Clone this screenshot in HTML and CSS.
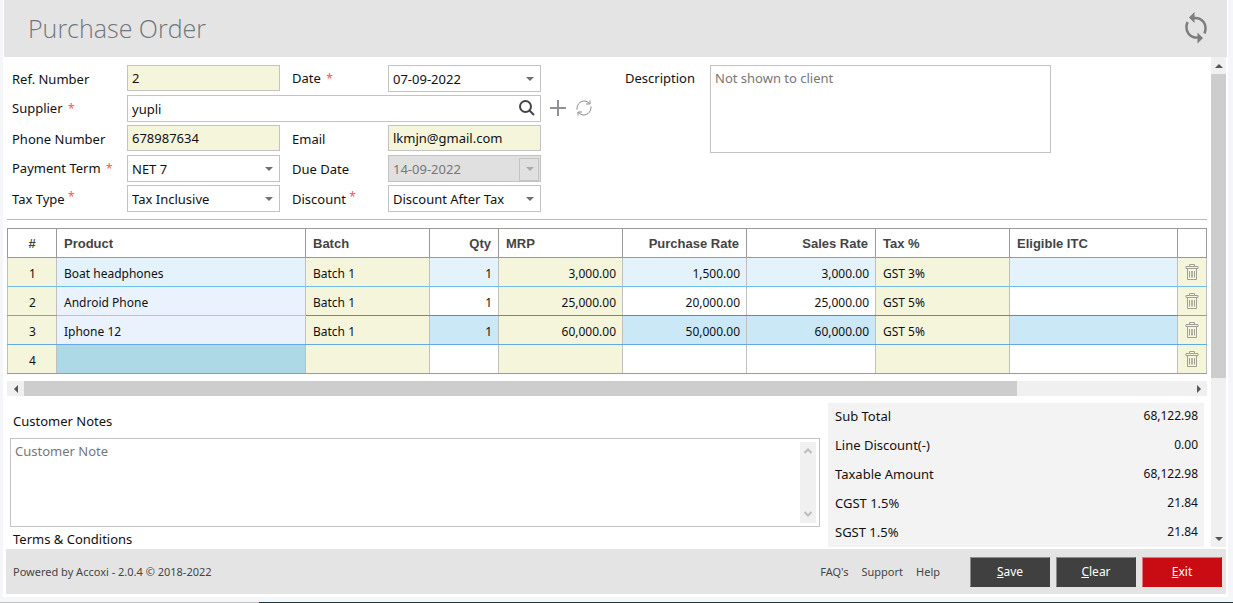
FILE: index.html
```html
<!DOCTYPE html>
<html lang="en">
<head>
    <meta charset="UTF-8">
    <meta name="viewport" content="width=device-width, initial-scale=1.0">
    <title>Purchase Order</title>
    <link rel="stylesheet" href="styles.css">
</head>
<body>
    <!-- Shared icons -->
    <svg class="sprite" aria-hidden="true">
        <symbol id="icon-trash" viewBox="0 0 14 16">
            <path d="M4.5 2.500V.5h5v2M1 2.500h12v2H1zM2.500 5v10.500h9V5" fill="none" stroke="#a0a094"/>
            <path d="M4.500 7v6.500M9.500 7v6.500" stroke="#a0a094"/>
            <path d="M7 7v6.500" stroke="#b4b4a6" stroke-width="2"/>
        </symbol>
    </svg>

    <div class="window">
        <header class="header">
            <h1>Purchase Order</h1>
            <button class="icon-btn" type="button" aria-label="Refresh">
                <svg width="24" height="32" viewBox="0 0 24 32">
                    <path d="M9 6C18 5 24 12 20.500 21.500M15 25.500C6 26.500 0 19.500 3.500 10" fill="none" stroke="#7d7d7d" stroke-width="2.500"/>
                    <path d="M5 5.500L10.500 0V11zM19 26L13.500 20.500V31.500z" fill="#7d7d7d"/>
                </svg>
            </button>
        </header>

        <div class="main">
            <main class="content">
                <form class="order-form">
                    <div class="fields">
                        <label for="ref">Ref. Number</label>
                        <input id="ref" class="readonly" type="text" value="2" readonly>
                        <label class="second" for="date">Date <span class="req">*</span></label>
                        <div class="drop"><input id="date" type="text" value="07-09-2022"></div>

                        <label for="supplier">Supplier <span class="req">*</span></label>
                        <div class="supplier">
                            <input id="supplier" type="text" value="yupli">
                            <button class="icon-btn search" type="button" aria-label="Search supplier">
                                <svg width="18" height="18" viewBox="0 0 18 18" fill="none" stroke="#444" stroke-width="2">
                                    <circle cx="7.500" cy="7.500" r="5.500"/>
                                    <path d="M11.500 11.500l4.500 4.500"/>
                                </svg>
                            </button>
                        </div>

                        <label for="phone">Phone Number</label>
                        <input id="phone" class="readonly" type="text" value="678987634" readonly>
                        <label class="second" for="email">Email</label>
                        <input id="email" class="readonly" type="text" value="lkmjn@gmail.com" readonly>

                        <label for="term">Payment Term <span class="req">*</span></label>
                        <div class="drop"><select id="term"><option>NET 7</option></select></div>
                        <label class="second" for="due">Due Date</label>
                        <div class="drop disabled"><input id="due" type="text" value="14-09-2022" disabled></div>

                        <label for="taxtype">Tax Type <span class="req raised">*</span></label>
                        <div class="drop"><select id="taxtype"><option>Tax Inclusive</option></select></div>
                        <label class="second" for="discount">Discount <span class="req raised">*</span></label>
                        <div class="drop"><select id="discount"><option>Discount After Tax</option></select></div>
                    </div>

                    <div class="supplier-actions">
                        <button class="icon-btn" type="button" aria-label="Add supplier">
                            <svg width="16" height="16" viewBox="0 0 16 16"><path d="M8 0v16M0 8h16" stroke="#8e9297" stroke-width="2"/></svg>
                        </button>
                        <button class="icon-btn" type="button" aria-label="Reload suppliers">
                            <svg width="16" height="16" viewBox="0 0 16 16" fill="none" stroke="#85898d">
                                <path d="M1 9.500C.5 3.500 6-.5 11 1.500L13.500 3.500M15 6.500C15.500 12.500 10 16.500 5 14.500L2.500 12.500"/>
                                <path d="M14 .5v3.500h-4M2 15.500V12h4"/>
                            </svg>
                        </button>
                    </div>

                    <label class="desc-label" for="desc">Description</label>
                    <textarea id="desc" class="desc" placeholder="Not shown to client"></textarea>
                </form>

                <!-- Order lines -->
                <table class="lines">
                    <colgroup>
                        <col class="c-num"><col class="c-product"><col class="c-batch"><col class="c-qty"><col class="c-mrp">
                        <col class="c-prate"><col class="c-srate"><col class="c-tax"><col class="c-itc"><col class="c-del">
                    </colgroup>
                    <thead>
                        <tr>
                            <th class="mid">#</th>
                            <th>Product</th>
                            <th>Batch</th>
                            <th class="num">Qty</th>
                            <th>MRP</th>
                            <th class="num">Purchase Rate</th>
                            <th class="num">Sales Rate</th>
                            <th>Tax %</th>
                            <th>Eligible ITC</th>
                            <th></th>
                        </tr>
                    </thead>
                    <tbody>
                        <tr class="hover">
                            <td class="fixed mid">1</td>
                            <td class="product">Boat headphones</td>
                            <td class="fixed">Batch 1</td>
                            <td class="num">1</td>
                            <td class="fixed num">3,000.00</td>
                            <td class="num">1,500.00</td>
                            <td class="num">3,000.00</td>
                            <td class="fixed">GST 3%</td>
                            <td></td>
                            <td class="fixed del"><button class="icon-btn" type="button" aria-label="Delete line 1"><svg width="14" height="16"><use href="#icon-trash"/></svg></button></td>
                        </tr>
                        <tr class="before-selected">
                            <td class="fixed mid">2</td>
                            <td class="product">Android Phone</td>
                            <td class="fixed">Batch 1</td>
                            <td class="num">1</td>
                            <td class="fixed num">25,000.00</td>
                            <td class="num">20,000.00</td>
                            <td class="num">25,000.00</td>
                            <td class="fixed">GST 5%</td>
                            <td></td>
                            <td class="fixed del"><button class="icon-btn" type="button" aria-label="Delete line 2"><svg width="14" height="16"><use href="#icon-trash"/></svg></button></td>
                        </tr>
                        <tr class="selected">
                            <td class="fixed mid">3</td>
                            <td class="product">Iphone 12</td>
                            <td class="fixed">Batch 1</td>
                            <td class="num">1</td>
                            <td class="fixed num">60,000.00</td>
                            <td class="num">50,000.00</td>
                            <td class="num">60,000.00</td>
                            <td class="fixed">GST 5%</td>
                            <td></td>
                            <td class="fixed del"><button class="icon-btn" type="button" aria-label="Delete line 3"><svg width="14" height="16"><use href="#icon-trash"/></svg></button></td>
                        </tr>
                        <tr>
                            <td class="fixed mid">4</td>
                            <td class="product active"></td>
                            <td class="fixed"></td>
                            <td></td>
                            <td class="fixed"></td>
                            <td></td>
                            <td></td>
                            <td class="fixed"></td>
                            <td></td>
                            <td class="fixed del"><button class="icon-btn" type="button" aria-label="Delete line 4"><svg width="14" height="16"><use href="#icon-trash"/></svg></button></td>
                        </tr>
                    </tbody>
                </table>

                <div class="hscroll">
                    <span class="arrow left"></span>
                    <div class="track"><div class="thumb"></div></div>
                    <span class="arrow right"></span>
                </div>

                <div class="bottom">
                    <div class="notes">
                        <label for="note">Customer Notes</label>
                        <div class="note-box">
                            <textarea id="note" placeholder="Customer Note"></textarea>
                            <div class="note-scroll">
                                <svg width="8" height="6" viewBox="0 0 8 6"><path d="M.5 5L4 1.500 7.500 5" fill="none" stroke="#bdbdbd" stroke-width="2"/></svg>
                                <svg width="8" height="6" viewBox="0 0 8 6"><path d="M.5 1L4 4.500 7.500 1" fill="none" stroke="#bdbdbd" stroke-width="2"/></svg>
                            </div>
                        </div>
                        <p class="terms">Terms &amp; Conditions</p>
                    </div>
                    <dl class="totals">
                        <div><dt>Sub Total</dt><dd>68,122.98</dd></div>
                        <div><dt>Line Discount(-)</dt><dd>0.00</dd></div>
                        <div><dt>Taxable Amount</dt><dd>68,122.98</dd></div>
                        <div><dt>CGST 1.5%</dt><dd>21.84</dd></div>
                        <div><dt>SGST 1.5%</dt><dd>21.84</dd></div>
                    </dl>
                </div>
            </main>

            <div class="vscroll">
                <span class="arrow up"></span>
                <div class="track"><div class="thumb"></div></div>
                <span class="arrow down"></span>
            </div>
        </div>

        <footer class="footer">
            <p>Powered by Accoxi - 2.0.4 © 2018-2022</p>
            <nav class="links">
                <a href="#">FAQ's</a>
                <a href="#">Support</a>
                <a href="#">Help</a>
            </nav>
            <div class="buttons">
                <button type="button"><u>S</u>ave</button>
                <button type="button"><u>C</u>lear</button>
                <button class="exit" type="button"><u>E</u>xit</button>
            </div>
        </footer>
    </div>
    <div class="taskbar"></div>
</body>
</html>
```
FILE: styles.css
```css
* {
    box-sizing: border-box;
}

body {
    margin: 0;
    height: 100vh;
    display: flex;
    flex-direction: column;
    overflow: hidden;
    background: #f4f6f9;
    font-family: "Noto Sans", sans-serif;
    font-size: 13px;
    line-height: 18px;
    color: #111;
}

input, select, textarea, button {
    font: inherit;
    color: inherit;
}

p, dl, dd {
    margin: 0;
}

.sprite {
    position: absolute;
    width: 0;
    height: 0;
}

.icon-btn {
    display: flex;
    padding: 0;
    border: none;
    background: none;
    cursor: pointer;
}

/* --- Window --- */
.window {
    flex: 1;
    min-height: 0;
    margin: 0 5px 5px 3px;
    padding: 0 1px 3px;
    display: flex;
    flex-direction: column;
    background: #fff;
}

.header {
    flex: none;
    height: 57px;
    padding: 0 19px 2px 24px;
    display: flex;
    align-items: center;
    justify-content: space-between;
    background: #e4e4e4;
}

.header h1 {
    margin: 0;
    font-family: "Open Sans", sans-serif;
    font-size: 25px;
    font-weight: 300;
    line-height: 36px;
    color: #70777d;
}

.main {
    flex: 1;
    min-height: 0;
    display: flex;
    gap: 4px;
}

.content {
    flex: 1;
    min-width: 0;
    padding-left: 3px;
    overflow: hidden;
}

/* --- Order form --- */
.order-form {
    display: flex;
    align-items: flex-start;
    padding: 8px 0 7px 5px;
    border-bottom: 1px solid #b9b9b9;
}

.fields {
    display: grid;
    grid-template-columns: 115px 153px 108px 153px;
    grid-auto-rows: 27px;
    row-gap: 3px;
    align-items: center;
}

.fields label.second {
    padding-left: 12px;
}

.req {
    margin-left: 2px;
    font-size: 12px;
    color: #f55;
}

.req.raised {
    margin-left: 0;
    vertical-align: 3px;
    line-height: 1;
}

.fields input, .fields select {
    width: 100%;
    height: 27px;
    padding: 0 4px;
    border: 1px solid #c3c3c3;
    border-radius: 0;
    background: #fff;
}

.fields select {
    appearance: none;
}

.fields input.readonly {
    align-self: start;
    height: 26px;
    background: #f5f5dc;
}

.drop, .supplier {
    position: relative;
}

/* Drop-down arrow */
.drop::after {
    content: "";
    position: absolute;
    top: 12px;
    right: 7px;
    border: 4px solid transparent;
    border-top-color: #707070;
    border-bottom: none;
    pointer-events: none;
}

.drop.disabled input {
    background: #e0e0e0;
    color: #777;
}

.drop.disabled::before {
    content: "";
    position: absolute;
    top: 3px;
    right: 2px;
    width: 18px;
    height: 21px;
    border: 1px solid #c3c3c3;
}

.drop.disabled::after {
    border-top-color: #aaa;
}

.supplier {
    grid-column: 2 / -1;
}

.search {
    position: absolute;
    top: 4px;
    right: 5px;
}

.supplier-actions {
    display: flex;
    gap: 10px;
    margin: 35px 0 0 9px;
}

.desc-label {
    width: 85px;
    margin: 4px 0 0 33px;
}

.desc {
    flex: 0 1 341px;
    min-width: 0;
    height: 88px;
}

textarea {
    padding: 3px 4px;
    border: 1px solid #c3c3c3;
    resize: none;
}

textarea::placeholder {
    color: #777;
}

/* --- Order lines --- */
.lines {
    width: 100%;
    margin-top: 8px;
    table-layout: fixed;
    border-collapse: collapse;
    font-size: 12px;
}

.c-num { width: 49px; }
.c-batch { width: 124px; }
.c-qty { width: 69px; }
.c-mrp { width: 124px; }
.c-prate { width: 124px; }
.c-srate { width: 129px; }
.c-tax { width: 134px; }
.c-itc { width: 168px; }
.c-del { width: 29px; }

.lines th, .lines td {
    height: 29px;
    padding: 2px 7px 0;
    text-align: left;
    white-space: nowrap;
}

.lines th {
    border: 1px solid #999;
    font-family: "Liberation Sans", Arial, sans-serif;
    font-size: 13px;
    color: #444;
}

.lines td {
    padding: 4px 6px 0 7px;
    border: 1px solid #c0c0c0;
    border-bottom-color: #64a8e4;
}

.lines .num {
    text-align: right;
}

.lines .mid {
    text-align: center;
}

.lines .del {
    padding: 0 7px;
}

.lines td.product {
    background: #eaf3fd;
}

.hover td, .lines .hover .product {
    background: #e4f3fb;
}

.lines .hover td {
    border-bottom-color: #72bfe6;
}

.lines .before-selected td {
    border-bottom-color: #26a0da;
}

.lines .before-selected .mid, .lines .before-selected .del {
    border-bottom-color: #64a8e4;
}

.lines .before-selected .product {
    border-bottom-color: #c0c0c0;
}

.selected td {
    background: #cbe8f6;
}

.lines td.fixed {
    background: #f5f5dc;
}

.lines td.active {
    background: #add8e6;
}

/* --- Scrollbars --- */
.hscroll, .vscroll {
    display: flex;
    background: #f0f0f0;
}

.hscroll {
    height: 15px;
    margin-top: 7px;
}

.vscroll {
    flex: none;
    flex-direction: column;
    width: 15px;
    margin-right: 1px;
}

.track {
    flex: 1;
}

.thumb {
    background: #cdcdcd;
}

.hscroll .thumb {
    width: 85.2%;
    height: 100%;
}

.vscroll .thumb {
    height: 66.6%;
}

.arrow {
    flex: none;
    width: 17px;
    height: 15px;
    display: grid;
    place-items: center;
}

.vscroll .arrow {
    width: 15px;
    height: 17px;
}

.arrow::before {
    content: "";
    border: 4px solid transparent;
}

.arrow.left::before { border-right-color: #555; border-left: none; }
.arrow.right::before { border-left-color: #555; border-right: none; }
.arrow.up::before { border-bottom-color: #555; border-top: none; }
.arrow.down::before { border-top-color: #555; border-bottom: none; }

/* --- Notes and totals --- */
.bottom {
    display: flex;
    gap: 8px;
    padding: 7px 3px 0;
}

.notes {
    flex: 1;
    min-width: 0;
    padding-top: 9px;
}

.notes label, .terms {
    display: block;
    padding-left: 3px;
}

.note-box {
    position: relative;
    margin-top: 8px;
}

.note-box textarea {
    display: block;
    width: 100%;
    height: 89px;
}

.note-scroll {
    position: absolute;
    top: 4px;
    right: 4px;
    bottom: 4px;
    width: 16px;
    padding: 6px 0;
    display: flex;
    flex-direction: column;
    align-items: center;
    justify-content: space-between;
    background: #f0f0f0;
}

.terms {
    margin-top: 3px;
}

.totals {
    width: 376px;
    background: #f3f3f3;
}

.totals div {
    display: flex;
    justify-content: space-between;
    height: 29px;
    padding: 4px 6px 0 7px;
}

.totals dd {
    font-size: 12px;
}

/* --- Footer --- */
.footer {
    flex: none;
    height: 45px;
    margin: 2px 1px 0 2px;
    padding: 0 4px 0 7px;
    display: flex;
    align-items: center;
    background: #e4e4e4;
    font-size: 11px;
    color: #444;
}

.links {
    display: flex;
    gap: 13px;
    margin-left: auto;
}

.links a {
    color: inherit;
    text-decoration: none;
}

.buttons {
    display: flex;
    gap: 6px;
    margin-left: 30px;
}

.buttons button {
    width: 80px;
    height: 30px;
    padding: 0;
    border: 1px solid #404040;
    border-top-color: #8c8c8c;
    border-left-color: #8c8c8c;
    background: #404040;
    color: #fff;
    font-size: 12px;
}

.buttons .exit {
    border-color: #e0787c #c90c14 #c90c14 #e0787c;
    background: #c90c14;
}

.taskbar {
    flex: none;
    height: 1px;
    background: linear-gradient(to right, #c0c0c0 21%, #1d3540 21%);
}
```
